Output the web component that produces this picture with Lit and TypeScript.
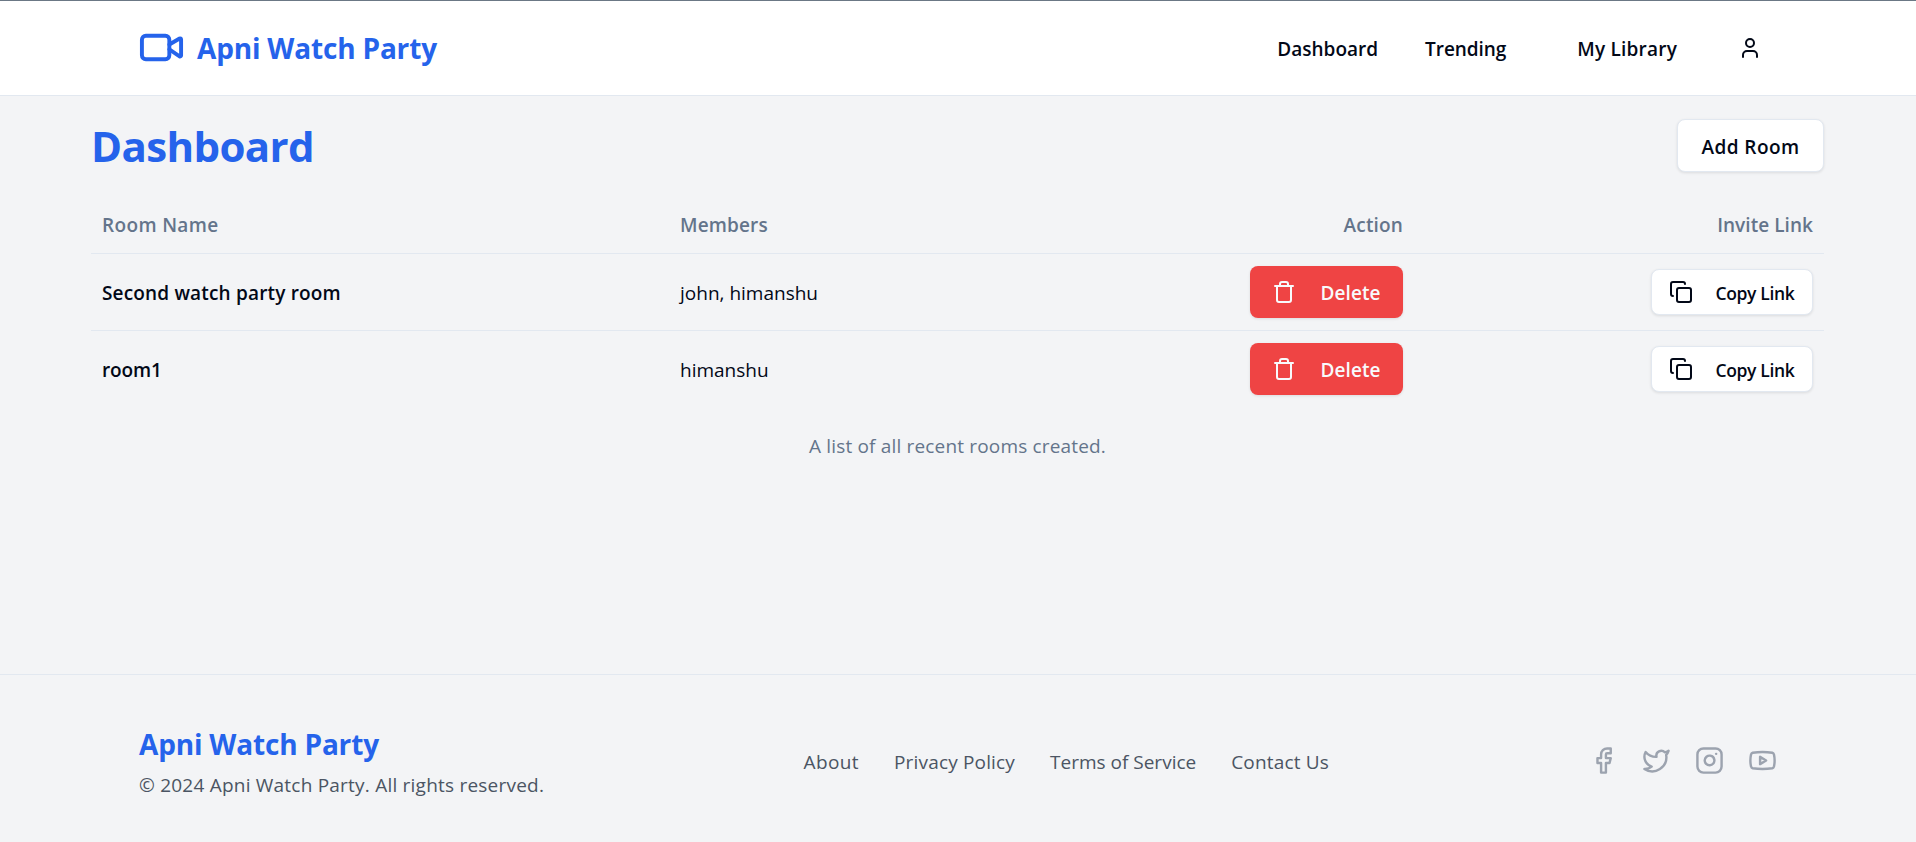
import { LitElement, html, css, svg } from "lit";
import { customElement } from "lit/decorators.js";

const rooms = [
  { name: "Second watch party room", members: "john, himanshu" },
  { name: "room1", members: "himanshu" },
];

const lucide = (cls: string, body: unknown) => html`<svg class=${cls} viewBox="0 0 24 24" fill="none"
  stroke="currentColor" stroke-width="2" stroke-linecap="round" stroke-linejoin="round">${body}</svg>`;

const social = [
  svg`<path d="M18 2h-3a5 5 0 0 0-5 5v3H7v4h3v8h4v-8h3l1-4h-4V7a1 1 0 0 1 1-1h3z"/>`,
  svg`<path d="M22 4s-.7 2.1-2 3.4c1.6 10-9.4 17.3-18 11.6 2.2.1 4.4-.6 6-2C3 15.5.5 9.6 3 5c2.2 2.6 5.6 4.1 9 4-.9-4.2 4-6.6 7-3.8 1.1 0 3-1.2 3-1.2z"/>`,
  svg`<rect width="20" height="20" x="2" y="2" rx="5" ry="5"/><path d="M16 11.37A4 4 0 1 1 12.63 8 4 4 0 0 1 16 11.37z"/><path d="M17.5 6.5h.01"/>`,
  svg`<path d="M2.5 17a24.12 24.12 0 0 1 0-10 2 2 0 0 1 1.4-1.4 49.56 49.56 0 0 1 16.2 0A2 2 0 0 1 21.5 7a24.12 24.12 0 0 1 0 10 2 2 0 0 1-1.4 1.4 49.55 49.55 0 0 1-16.2 0A2 2 0 0 1 2.5 17"/><path d="m10 15 5-3-5-3z"/>`,
];

@customElement("app-root")
export class AppRoot extends LitElement {
  static styles = css`
    :host {
      display: flex;
      flex-direction: column;
      box-sizing: border-box;
      height: 842px;
      overflow: hidden;
      background: #f3f4f6;
      color: #020817;
      font-family: "Segoe UI", "Open Sans", "Noto Sans", sans-serif;
      font-size: 19px;
      line-height: 28px;
      white-space: nowrap;
    }
    * { box-sizing: border-box; }
    svg { display: block; flex: none; }
    header {
      display: flex;
      align-items: center;
      height: 96px;
      padding: 0 139px;
      background: #fff;
      border-top: 1px solid #6b7885;
      border-bottom: 1px solid #e2e8f0;
    }
    .brand { display: flex; align-items: center; flex: 1; color: #2563eb; }
    .logo { width: 47px; height: 47px; margin: 0 12px 1px -1px; }
    .brand-name { font-size: 28px; letter-spacing: -0.18px; font-weight: 700; line-height: 40px; color: #2563eb; }
    nav { display: flex; align-items: center; font-weight: 600; letter-spacing: 0; }
    nav span { padding-top: 1px; }
    .n2 { margin-left: 47px; letter-spacing: -0.05px; }
    .n3 { margin-left: 71px; letter-spacing: 0.2px; }
    .user { width: 24px; height: 24px; margin: 0 15px 0 61px; }
    main { flex: 1; padding: 22px 92px 0 91px; }
    .head { display: flex; align-items: flex-end; justify-content: space-between; height: 54px; }
    h1 { margin: 0; padding-bottom: 1px; font-size: 42px; line-height: 50px; font-weight: 700; letter-spacing: -0.62px; color: #2563eb; }
    button {
      display: inline-flex;
      align-items: center;
      justify-content: center;
      font: inherit;
      font-weight: 600;
      color: inherit;
      border: 1px solid #e2e8f0;
      border-radius: 8px;
      background: #fff;
      padding: 0;
      box-shadow: 0 1px 3px rgb(0 0 0 / 0.1);
    }
    button span { padding-top: 2px; }
    .add { width: 147px; height: 53px; letter-spacing: 0.4px; }
    .row {
      display: grid;
      grid-template-columns: 578px 445px 1fr 410px;
      align-items: center;
      height: 77px;
      padding: 0 11px;
      border-bottom: 1px solid #e2e8f0;
    }
    .row.last { border-bottom-color: transparent; }
    .row.th { height: 56px; margin-top: 26px; padding-bottom: 2px; color: #64748b; font-weight: 600; letter-spacing: 0.15px; }
    .th .room-col { letter-spacing: 0.35px; }
    .th .link-col { letter-spacing: 0.05px; }
    .right { display: flex; justify-content: flex-end; }
    .name { padding-top: 2px; font-weight: 600; letter-spacing: 0.17px; }
    .last .name { letter-spacing: -0.1px; }
    .members { padding-top: 2px; }
    .delete { width: 153px; height: 52px; background: #ef4444; border: 0; color: #f8fafc; letter-spacing: 0.1px; }
    .copy { width: 162px; height: 46px; font-size: 17.5px; letter-spacing: -0.33px; }
    .trash { width: 24px; height: 24px; margin-right: 24px; }
    .copy-icon { width: 24px; height: 24px; margin-right: 22px; }
    .caption { margin-top: 24px; text-align: center; color: #64748b; letter-spacing: 0.17px; }
    footer {
      display: flex;
      align-items: center;
      height: 168px;
      padding: 4px 139px 0;
      border-top: 1px solid #e2e8f0;
      color: #4b5563;
    }
    .about { width: 664.5px; }
    .copyright { margin-top: 7px; margin-bottom: -1px; letter-spacing: 0.22px; }
    .links { display: flex; gap: 35px; flex: 1; padding-top: 2px; letter-spacing: 0.17px; }
    .links .wide { letter-spacing: 0.4px; }
    .links .tight { letter-spacing: 0; }
    .social { display: flex; gap: 24px; color: #9ca3af; }
    .social svg { width: 29px; height: 29px; }
  `;

  render() {
    return html`
      <header>
        <div class="brand">
          ${lucide("logo", svg`<path d="m16 13 5.223 3.482a.5.5 0 0 0 .777-.416V7.87a.5.5 0 0 0-.752-.432L16 10.5"/><rect width="14" height="12" x="2" y="6" rx="2"/>`)}
          <span class="brand-name">Apni Watch Party</span>
        </div>
        <nav>
          <span class="n1">Dashboard</span>
          <span class="n2">Trending</span>
          <span class="n3">My Library</span>
          ${lucide("user", svg`<path d="M19 21v-2a4 4 0 0 0-4-4H9a4 4 0 0 0-4 4v2"/><circle cx="12" cy="7" r="4"/>`)}
        </nav>
      </header>
      <main>
        <div class="head">
          <h1>Dashboard</h1>
          <button class="add"><span>Add Room</span></button>
        </div>
        <div class="row th">
          <div class="room-col">Room Name</div>
          <div>Members</div>
          <div class="right">Action</div>
          <div class="right link-col">Invite Link</div>
        </div>
        ${rooms.map((r, i) => html`
          <div class="row ${i === rooms.length - 1 ? "last" : ""}">
            <div class="name">${r.name}</div>
            <div class="members">${r.members}</div>
            <div class="right"><button class="delete">
              ${lucide("trash", svg`<path d="M3 6h18"/><path d="M19 6v14c0 1-1 2-2 2H7c-1 0-2-1-2-2V6"/><path d="M8 6V4c0-1 1-2 2-2h4c1 0 2 1 2 2v2"/>`)}
              <span>Delete</span></button></div>
            <div class="right"><button class="copy">
              ${lucide("copy-icon", svg`<rect width="14" height="14" x="8" y="8" rx="2" ry="2"/><path d="M4 16c-1.1 0-2-.9-2-2V4c0-1.1.9-2 2-2h10c1.1 0 2 .9 2 2"/>`)}
              <span>Copy Link</span></button></div>
          </div>`)}
        <div class="caption">A list of all recent rooms created.</div>
      </main>
      <footer>
        <div class="about">
          <div class="brand-name">Apni Watch Party</div>
          <div class="copyright">© 2024 Apni Watch Party. All rights reserved.</div>
        </div>
        <div class="links">
          <span class="wide">About</span><span>Privacy Policy</span><span class="tight">Terms of Service</span><span>Contact Us</span>
        </div>
        <div class="social">${social.map((s) => lucide("s", s))}</div>
      </footer>
    `;
  }
}
